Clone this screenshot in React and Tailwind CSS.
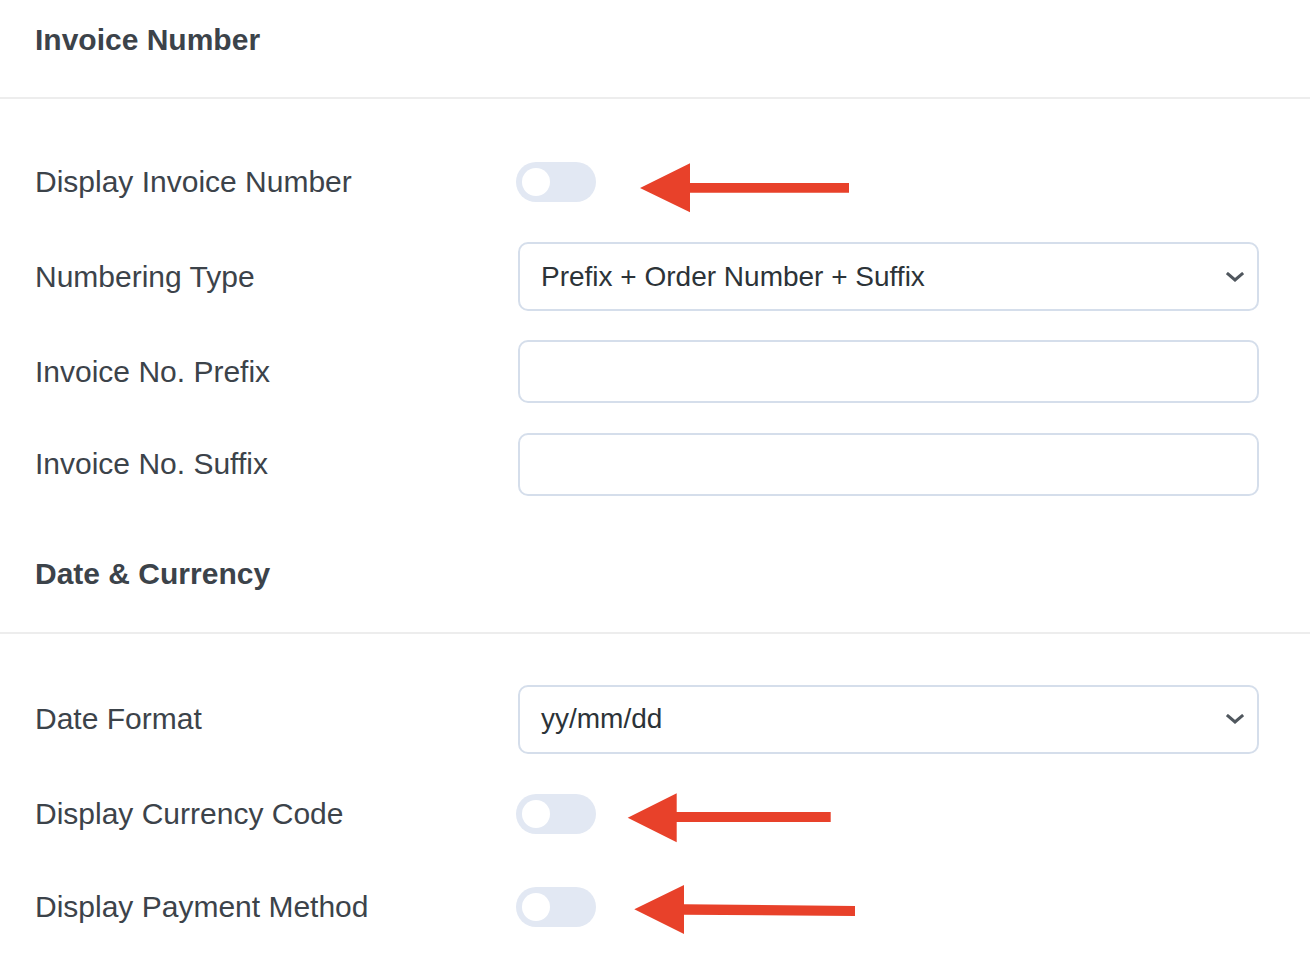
const font = { fontFamily: '"Liberation Sans", Arial, Helvetica, sans-serif' };

function Toggle() {
  return (
    <div className="-ml-[2px] flex h-[40px] w-[80px] items-center rounded-full bg-[#e2e8f3]">
      <span className="ml-[6px] h-[28px] w-[28px] rounded-full bg-white" />
    </div>
  );
}

function Select({ value }) {
  return (
    <div className="flex h-[69px] w-full items-center justify-between rounded-[10px] border-2 border-[#d5deeb] bg-white pl-[21px] pr-[13px] text-[28px] text-[#2c3338]">
      <span>{value}</span>
      <svg width="18" height="10" viewBox="0 0 18 10" fill="none">
        <path d="M2 2l7 6 7-6" stroke="#50575e" strokeWidth="3" strokeLinecap="square" />
      </svg>
    </div>
  );
}

function Input() {
  return <div className="h-[63px] w-full rounded-[10px] border-2 border-[#d5deeb] bg-white" />;
}

function Row({ label, height, children }) {
  return (
    <div className={`flex items-center pl-[35px] pr-[51px] ${height}`}>
      <div className="w-[483px] shrink-0 text-[30px] leading-[36px] text-[#3c434a]">{label}</div>
      <div className="relative flex flex-1 items-center self-stretch">{children}</div>
    </div>
  );
}

function Heading({ children, className }) {
  return (
    <div className={`border-b-2 border-[#ededed] pl-[35px] ${className}`}>
      <h2 className="text-[30px] font-bold leading-[36px] text-[#3c434a]">{children}</h2>
    </div>
  );
}

export default function App() {
  return (
    <div className="min-h-screen w-full bg-white" style={font}>
      <Heading className="pt-[22px] pb-[39px]">Invoice Number</Heading>

      <div className="pt-[35px]">
        <Row label="Display Invoice Number" height="h-[95px]">
          <Toggle />
          <svg className="absolute left-[118px] top-[25px]" width="216" height="58" viewBox="0 0 216 58">
            <polygon points="4,29 54,4.3 54,24 213,24 213,33.7 54,33.7 54,53.3" fill="#e8412a" />
          </svg>
        </Row>
        <Row label="Numbering Type" height="h-[95px]">
          <Select value="Prefix + Order Number + Suffix" />
        </Row>
        <Row label="Invoice No. Prefix" height="h-[95px]">
          <Input />
        </Row>
        <Row label="Invoice No. Suffix" height="h-[90px]">
          <Input />
        </Row>
      </div>

      <Heading className="mt-[47px] pb-[40px]">Date &amp; Currency</Heading>

      <div className="pt-[37px]">
        <Row label="Date Format" height="h-[96px]">
          <Select value="yy/mm/dd" />
        </Row>
        <Row label="Display Currency Code" height="h-[94px]">
          <Toggle />
          <svg className="absolute left-[106px] top-[23px]" width="210" height="56" viewBox="0 0 210 56">
            <polygon points="3.7,27.7 52.7,3.3 52.7,22 206.7,22 206.7,32 52.7,32 52.7,52.3" fill="#e8412a" />
          </svg>
        </Row>
        <Row label="Display Payment Method" height="h-[92px]">
          <Toggle />
          <svg className="absolute left-[112px] top-[20px]" width="228" height="57" viewBox="0 0 228 57">
            <polygon points="4.3,28.3 54,4 54,23.3 225,25 225,35 54,33.7 54,53" fill="#e8412a" />
          </svg>
        </Row>
      </div>
    </div>
  );
}
